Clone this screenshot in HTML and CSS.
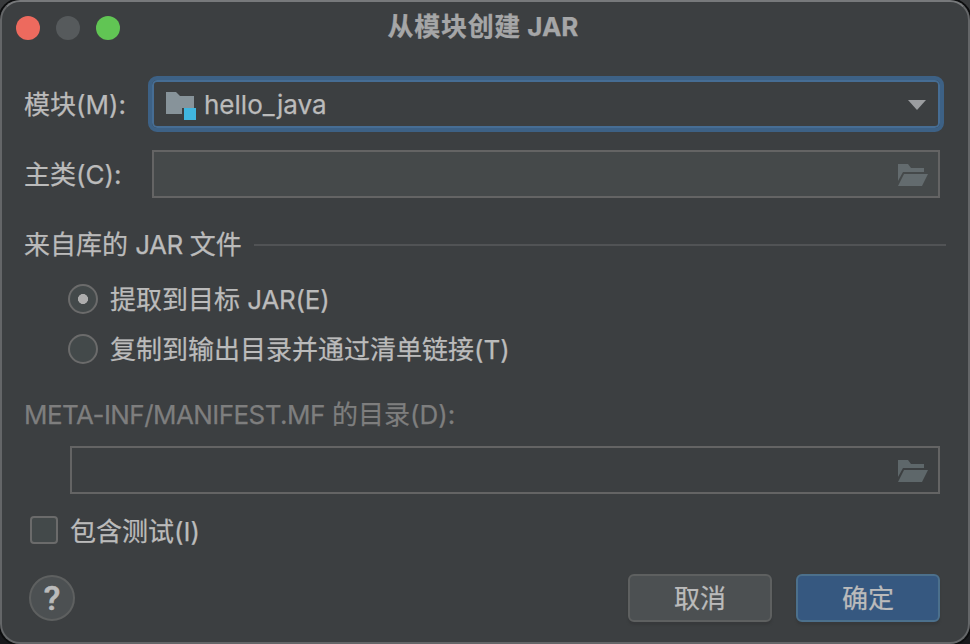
FILE: index.html
```html
<!DOCTYPE html>
<html lang="zh-CN">
<head>
<meta charset="utf-8">
<title>从模块创建 JAR</title>
<link rel="stylesheet" href="styles.css">
</head>
<body>
<main class="dialog">
  <header class="titlebar">
    <div class="lights"><i class="light close"></i><i class="light minimize"></i><i class="light zoom"></i></div>
    <h1 class="title"><span class="title-cjk">从模块创建</span> JAR</h1>
  </header>
  <div class="row module-row">
    <label class="label">模块(M):</label>
    <div class="combo">
      <svg class="module-icon" width="32" height="30" viewBox="0 0 32 30"><path fill="#87939a" d="M0 1h10l4 4h14v12H16v6H0z"/><path fill="#40b6e0" d="M18 17h12v12H18z"/></svg>
      <span class="combo-text">hello_java</span>
      <svg class="arrow" width="18" height="10" viewBox="0 0 18 10"><path fill="#9b9da0" d="M0 0h18L9 10z"/></svg>
    </div>
  </div>
  <div class="row class-row">
    <label class="label">主类(C):</label>
    <div class="field field-enabled">
      <svg class="folder" width="30" height="22" viewBox="0 0 30 22"><path fill="#636b6e" d="M0 0h10l3 4h13v4H5L0 17z"/><path fill="#636b6e" d="M6 10h24l-6 12H0z"/></svg>
    </div>
  </div>
  <div class="section"><span>来自库的 <span class="section-latin">JAR</span> 文件</span><i class="rule"></i></div>
  <div class="option first"><i class="radio checked"></i><span class="caption">提取到目标 <span class="extract-latin">JAR(E)</span></span></div>
  <div class="option"><i class="radio"></i><span class="caption">复制到输出目录并通过清单链接(T)</span></div>
  <div class="manifest-label"><span class="manifest-latin">META-INF/MANIFEST.MF</span> 的目录(D):</div>
  <div class="field manifest-field">
    <svg class="folder" width="30" height="22" viewBox="0 0 30 22"><path fill="#5e676a" d="M0 0h10l3 4h13v4H5L0 17z"/><path fill="#5e676a" d="M6 10h24l-6 12H0z"/></svg>
  </div>
  <div class="tests"><i class="checkbox"></i><span class="caption">包含测试(I)</span></div>
  <footer class="footer">
    <button class="help">?</button>
    <button class="button">取消</button>
    <button class="button primary">确定</button>
  </footer>
</main>
</body>
</html>
```
FILE: styles.css
```css
* { box-sizing: border-box; }
body {
  margin: 0;
  background: linear-gradient(#383a3c, #17181b);
  color: #bbb;
  font: 26px/30px Inter, "Noto Sans CJK SC", sans-serif;
  -webkit-text-stroke: 0.25px currentColor;
  white-space: nowrap;
  overflow: hidden;
}
.dialog {
  width: 970px;
  height: 644px;
  border: 2px solid #646668;
  border-top-color: #77797b;
  border-radius: 20px;
  background: #3c3f41;
  box-shadow: 0 0 0 2px #0c0d0e;
}
.titlebar {
  display: grid;
  grid-template-columns: 160px 1fr 164px;
  height: 52px;
  align-items: center;
}
.lights { display: flex; gap: 16px; padding-left: 14px; }
.light { width: 24px; height: 24px; border-radius: 50%; }
.close { background: #ed6a5e; }
.minimize { background: #565a5c; }
.zoom { background: #61c554; }
.title {
  margin: 0 0 3px;
  color: #a5a6a7;
  font-size: 26px;
  font-weight: 700;
  text-align: center;
}
.title-cjk { letter-spacing: 0.7px; }
.row { display: flex; align-items: center; }
.label { width: 124px; flex: none; padding-top: 2px; }
.module-row { height: 56px; margin: 22px 24px 0 22px; }
.class-row { height: 48px; margin: 18px 28px 0 22px; }
.combo {
  display: flex;
  align-items: center;
  flex: 1;
  height: 56px;
  border: 4px solid #3d6185;
  border-radius: 9px;
  padding: 2px 12px 0 11px;
  box-shadow: inset 0 0 0 2px #466d94;
}
.module-icon { margin-left: 3px; margin-top: 2px; }
.combo-text { margin-left: 6px; }
.arrow { margin-left: auto; margin-right: 2px; }
.field {
  display: flex;
  align-items: center;
  justify-content: flex-end;
  height: 48px;
  border: 2px solid #646464;
  padding: 2px 10px 0 0;
}
.field-enabled { flex: 1; margin-left: 4px; background: #45494a; }
.section { display: flex; align-items: center; gap: 12px; height: 30px; margin: 32px 22px 0; }
.section-latin { letter-spacing: -0.6px; }
.extract-latin { letter-spacing: -0.25px; }
.manifest-latin { letter-spacing: -0.56px; }
.rule { flex: 1; height: 2px; background: #515355; }
.option { display: flex; align-items: center; gap: 12px; height: 30px; margin: 20px 0 0 66px; }
.option .caption { padding-top: 2px; }
.first { margin-top: 24px; }
.radio {
  width: 30px;
  height: 30px;
  border: 2px solid #6b6b6b;
  border-radius: 50%;
  background: #43494a;
}
.checked { background: radial-gradient(circle, #adadad 0 4.7px, #43494a 5.3px); }
.manifest-label { height: 30px; margin: 36px 0 0 22px; color: #7e7e7e; }
.manifest-field { margin: 16px 28px 0 68px; }
.tests { display: flex; align-items: center; gap: 12px; height: 28px; margin: 22px 0 0 28px; }
.tests .caption { padding-top: 3px; }
.checkbox { width: 28px; height: 28px; border: 2px solid #6b6b6b; border-radius: 4px; background: #43494a; }
.footer { display: flex; align-items: center; height: 48px; margin: 30px 28px 0 27px; }
button { color: #bbb; font: inherit; padding: 0; -webkit-text-stroke: inherit; }
.help {
  width: 46px;
  height: 46px;
  margin-right: auto;
  border: 2px solid #5e6060;
  border-radius: 50%;
  background: #4c5052;
  font: 500 34px/40px Roboto, sans-serif;
  -webkit-text-stroke: 0.6px currentColor;
}
.button {
  width: 144px;
  height: 48px;
  border: 2px solid #5e6060;
  border-radius: 6px;
  padding-top: 2px;
  background: #4c5052;
  box-shadow: 0 3px 2px #37393b;
}
.primary { margin-left: 24px; border-color: #4c708c; background: #365880; }
```
